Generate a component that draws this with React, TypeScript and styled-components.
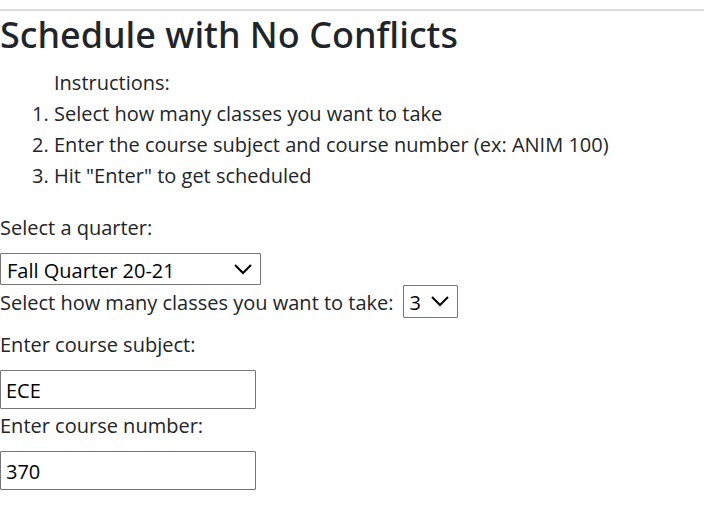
import React, { useState } from "react";
import styled, { createGlobalStyle } from "styled-components";

const GlobalStyle = createGlobalStyle`
  *, *::before, *::after { box-sizing: border-box; }
  body {
    margin: 0;
    background: #fff;
    color: #212529;
    font-family: "Open Sans", "Noto Sans", sans-serif;
    font-size: 20px;
    line-height: 31px;
  }
`;

const Page = styled.main`
  padding-top: 9px;
`;

const Header = styled.header`
  border-top: 2px solid #dbdbdf;
  margin-bottom: 8px;
`;

const Title = styled.h1`
  margin: 0;
  font-family: "Noto Sans", "Open Sans", sans-serif;
  font-size: 36px;
  line-height: 48px;
  font-weight: 500;
`;

const Steps = styled.ol`
  margin: 0 0 20px;
  padding-left: 54px;
`;

const StepsLabel = styled.li`
  list-style: none;
`;

const Field = styled.div`
  display: flex;
  flex-direction: column;
  align-items: flex-start;
`;

const InlineField = styled.div`
  display: flex;
  align-items: flex-start;
  gap: 9px;
  margin-bottom: 10px;
`;

const Label = styled.label`
  padding-top: 1px;
  margin-bottom: 10px;
`;

const InlineLabel = styled.label`
  padding-top: 2px;
`;

const SelectBox = styled.span<{ $width: number; $height: number }>`
  position: relative;
  display: block;
  width: ${(p) => p.$width}px;
  height: ${(p) => p.$height}px;
`;

const Select = styled.select`
  display: block;
  width: 100%;
  height: 100%;
  padding: 1px 6px 0;
  appearance: none;
  border: 1px solid #767676;
  border-radius: 1px;
  background: #fff;
  color: #000;
  font: inherit;
`;

const Chevron = styled.svg`
  position: absolute;
  right: 8px;
  top: 10px;
  width: 20px;
  height: 12px;
  pointer-events: none;
`;

const Input = styled.input`
  width: 256px;
  height: 39px;
  padding: 2px 5px 0;
  border: 1px solid #767676;
  border-radius: 1px;
  background: #fff;
  color: #000;
  font: inherit;
`;

type DropdownProps = {
  id: string;
  width: number;
  height: number;
  options: string[];
  initial: string;
};

function Dropdown({ id, width, height, options, initial }: DropdownProps) {
  return (
    <SelectBox $width={width} $height={height}>
      <Select id={id} defaultValue={initial}>
        {options.map((o) => (
          <option key={o}>{o}</option>
        ))}
      </Select>
      <Chevron viewBox="0 0 20 12" aria-hidden="true">
        <path d="M2 2 L10 10 L18 2" fill="none" stroke="#000" strokeWidth="2" />
      </Chevron>
    </SelectBox>
  );
}

export default function App() {
  const [subject, setSubject] = useState("ECE");
  const [number, setNumber] = useState("370");
  return (
    <Page>
      <GlobalStyle />
      <Header>
        <Title>Schedule with No Conflicts</Title>
      </Header>
      <Steps>
        <StepsLabel value={0}>Instructions:</StepsLabel>
        <li>Select how many classes you want to take</li>
        <li>Enter the course subject and course number (ex: ANIM 100)</li>
        <li>Hit "Enter" to get scheduled</li>
      </Steps>
      <Field>
        <Label htmlFor="quarter">Select a quarter:</Label>
        <Dropdown id="quarter" width={261} height={32} options={["Fall Quarter 20-21"]} initial="Fall Quarter 20-21" />
      </Field>
      <InlineField>
        <InlineLabel htmlFor="count">Select how many classes you want to take:</InlineLabel>
        <Dropdown id="count" width={55} height={33} options={["1", "2", "3", "4", "5"]} initial="3" />
      </InlineField>
      <Field>
        <Label htmlFor="subject">Enter course subject:</Label>
        <Input id="subject" value={subject} onChange={(e) => setSubject(e.target.value)} />
      </Field>
      <Field>
        <Label htmlFor="number">Enter course number:</Label>
        <Input id="number" value={number} onChange={(e) => setNumber(e.target.value)} />
      </Field>
    </Page>
  );
}
